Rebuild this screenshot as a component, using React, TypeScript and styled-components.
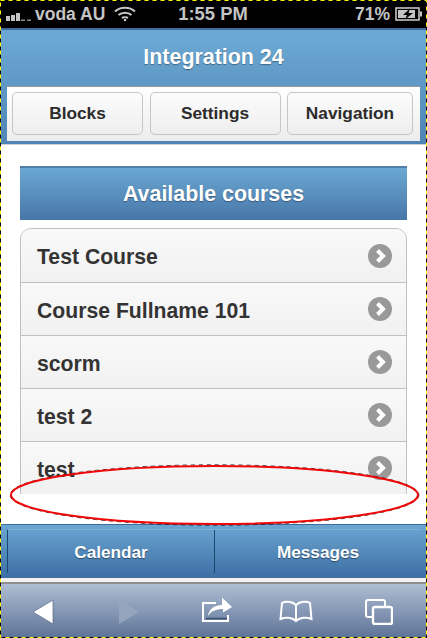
import React from "react";
import styled, { createGlobalStyle } from "styled-components";

const Global = createGlobalStyle`
  html, body { margin: 0; padding: 0; background: #fff; }
  * { box-sizing: border-box; }
`;

const Page = styled.div`
  position: relative;
  width: 427px;
  height: 638px;
  overflow: hidden;
  display: flex;
  flex-direction: column;
  background: #fff;
  font-family: "Liberation Sans", Arial, sans-serif;
  font-weight: 700;
`;

const StatusBar = styled.div`
  height: 28px;
  flex: none;
  background: #000;
  color: #c4c4c4;
  display: grid;
  grid-template-columns: 1fr auto 1fr;
  align-items: center;
  padding: 0 4px 0 5px;
  font-size: 17.5px;
`;
const StatusLeft = styled.div`display: flex; align-items: center; gap: 3px;`;
const StatusTime = styled.div`text-align: center; font-size: 18.4px; white-space: nowrap; margin-right: 2px;`;
const StatusRight = styled.div`display: flex; align-items: center; justify-content: flex-end; gap: 5px;`;
const SignalSvg = styled.svg`margin-top: 5px;`;
const WifiSvg = styled.svg`margin-left: 6px;`;

const Header = styled.div`
  flex: none;
  height: 116px;
  border-top: 2px solid #3f6b9c;
  background: linear-gradient(#6ba8d3 0, #6ba8d3 8px, #5084b5 100%);
  display: flex;
  flex-direction: column;
  padding: 0 1px;
`;
const Title = styled.div`
  height: 56px;
  flex: none;
  padding-bottom: 2px;
  display: flex;
  align-items: center;
  justify-content: center;
  color: #fff;
  font-size: 21.4px;
  text-shadow: 0 1px 1px rgba(0,0,0,.35);
`;
const NavStrip = styled.div`
  margin: 0 6px;
  height: 55px;
  background: linear-gradient(#ffffff, #ececec);
  border-top: 1px solid #9a9a9a;
  display: grid;
  grid-template-columns: 131px 131px 1fr;
  gap: 6.5px;
  padding: 5px 7px 6px 5px;
`;
const NavButton = styled.div`
  border: 1px solid #c6c6c6;
  border-radius: 5px;
  background: linear-gradient(#fcfcfc, #eeeeee);
  color: #2b2b2b;
  font-size: 17.3px;
  display: flex;
  align-items: center;
  justify-content: center;
`;

const Content = styled.div`
  flex: 1;
  min-height: 0;
  padding: 21px 20px 0 20px;
  border-top: 1px solid #d0d0d0;
`;
const SectionHead = styled.div`
  height: 54px;
  border-top: 2px solid #4f7fa9;
  background: linear-gradient(#6ba8d3, #4776a8);
  color: #fff;
  font-size: 21.4px;
  display: flex;
  align-items: center;
  justify-content: center;
  text-shadow: 0 1px 1px rgba(0,0,0,.35);
`;
const ListClip = styled.div`
  margin-top: 8px;
  height: 266px;
  overflow: hidden;
`;
const List = styled.div`
  height: 300px;
  border: 1px solid #c0c0c0;
  border-radius: 11px;
  overflow: hidden;
`;
const Row = styled.div`
  height: 53px;
  padding: 0 14px 0 16px;
  display: flex;
  align-items: center;
  justify-content: space-between;
  color: #333;
  font-size: 21.2px;
  background: linear-gradient(#f9f9f9, #f1f1f1);
  & + & { border-top: 1px solid #c0c0c0; }
`;
const RowLabel = styled.span`
  padding-top: 3px;
`;

const Footer = styled.div`
  flex: none;
  height: 54px;
  background: linear-gradient(#6ba6d2, #3d6ea4);
  padding: 4px 6px 5px 7px;
  border-top: 1px solid #3f6b9c;
`;
const FooterInner = styled.div`
  height: 100%;
  display: grid;
  grid-template-columns: 206px 1fr;
  border-top: 1px solid #7fb0d6;
  border-left: 1px solid #17486f;
`;
const FooterItem = styled.div<{ $divider?: boolean }>`
  display: flex;
  align-items: center;
  justify-content: center;
  padding-top: 2px;
  color: #fff;
  font-size: 17.2px;
  text-shadow: 0 1px 1px rgba(0,0,0,.45);
  ${(p) => (p.$divider ? "border-left: 1px solid #17486f;" : "")}
`;
const Gap = styled.div`
  flex: none;
  height: 6px;
  background: linear-gradient(#f2f2f2 0, #f2f2f2 4px, #8d8d8d 4px);
`;
const Toolbar = styled.div`
  flex: none;
  height: 54px;
  background: linear-gradient(#aebdd2, #5d7397);
  display: grid;
  grid-template-columns: 86px 86px 89px 70px 96px;
  align-items: center;
  justify-items: center;
  padding-top: 2px;
`;
const ShareSvg = styled.svg`margin-bottom: 5px;`;

const Overlay = styled.svg`
  position: absolute;
  left: 0;
  top: 0;
  pointer-events: none;
`;

const Chevron = () => (
  <svg width="24" height="24" viewBox="0 0 24 24">
    <circle cx="12" cy="12" r="12" fill="#999" />
    <path d="M9.5 6.5 L15 12 L9.5 17.5" fill="none" stroke="#fff" strokeWidth="4" />
  </svg>
);

const Signal = () => (
  <SignalSvg width="27" height="8" viewBox="0 0 27 8">
    <rect x="1" y="3" width="4" height="5" fill="#c4c4c4" />
    <rect x="6" y="2" width="4" height="6" fill="#c4c4c4" />
    <rect x="11" y="0" width="4" height="8" fill="#c4c4c4" />
    <rect x="16" y="6.5" width="4" height="1.5" fill="#8a8a8a" />
    <rect x="22" y="6.5" width="4" height="1.5" fill="#8a8a8a" />
  </SignalSvg>
);
const Wifi = () => (
  <WifiSvg width="22" height="16" viewBox="0 0 22 16" fill="none" stroke="#c4c4c4" strokeWidth="2.2">
    <path d="M1 5.5 C6.5 0.5 15.500 0.5 21 5.500" />
    <path d="M4.500 9 C8 6 14 6 17.500 9" />
    <path d="M8 12 C9.500 11 12.500 11 14 12" />
    <circle cx="11" cy="14" r="1.300" fill="#c4c4c4" stroke="none" />
  </WifiSvg>
);
const Battery = () => (
  <svg width="28" height="14" viewBox="0 0 28 14">
    <rect x="1" y="1" width="23" height="12" fill="none" stroke="#c4c4c4" strokeWidth="1.600" />
    <rect x="3" y="3" width="17" height="8" fill="#c4c4c4" />
    <rect x="25" y="4.500" width="2" height="5" fill="#c4c4c4" />
    <path d="M15 1.500 L8 8 H12 L10 12.500 L18 6 H13.500 Z" fill="#000" />
  </svg>
);

const ArrowLeft = () => (
  <svg width="22" height="26" viewBox="0 0 22 26"><path d="M21 1 V25 L1 13 Z" fill="#fff" stroke="#46597a" strokeWidth=".6" /></svg>
);
const ArrowRight = () => (
  <svg width="22" height="26" viewBox="0 0 22 26"><path d="M1 1 V25 L21 13 Z" fill="#94a5bd" /></svg>
);
const Share = () => (
  <ShareSvg width="32" height="26" viewBox="0 0 32 26" fill="none">
    <path d="M15 6 H2 V24 H27 V18" stroke="#fff" strokeWidth="2" />
    <path d="M5 21.500 H26" stroke="#3d4f6e" strokeWidth="1.500" />
    <path d="M7 19 C8 12 13 8.500 21 8 V0.500 L31 10 L22 15.500 V12 C15 12 10 14 7 19 Z" fill="#fff" />
  </ShareSvg>
);
const Book = () => (
  <svg width="34" height="24" viewBox="0 0 34 24" fill="none" stroke="#fff" strokeWidth="2">
    <path d="M17 5 C13 1 6 1 3 3 L1.500 19 C6 17 13 17 17 21 C21 17 28 17 32.500 19 L31 3 C28 1 21 1 17 5 Z" />
    <path d="M17 5 V21" />
  </svg>
);
const Tabs = () => (
  <svg width="28" height="26" viewBox="0 0 28 26" fill="none" stroke="#fff" strokeWidth="2">
    <path d="M7 18 H3 A2 2 0 0 1 1 16 V3 A2 2 0 0 1 3 1 H18 A2 2 0 0 1 20 3 V7" />
    <rect x="8" y="8" width="19" height="17" rx="2" strokeWidth="2.400" />
  </svg>
);

const courses = ["Test Course", "Course Fullname 101", "scorm", "test 2", "test"];

export default function App() {
  return (
    <>
      <Global />
      <Page>
        <StatusBar>
          <StatusLeft>
            <Signal />
            <span>voda AU</span>
            <Wifi />
          </StatusLeft>
          <StatusTime>1:55 PM</StatusTime>
          <StatusRight>
            <span>71%</span>
            <Battery />
          </StatusRight>
        </StatusBar>
        <Header>
          <Title>Integration 24</Title>
          <NavStrip>
            <NavButton>Blocks</NavButton>
            <NavButton>Settings</NavButton>
            <NavButton>Navigation</NavButton>
          </NavStrip>
        </Header>
        <Content>
          <SectionHead>Available courses</SectionHead>
          <ListClip>
            <List>
              {courses.map((c) => (
                <Row key={c}>
                  <RowLabel>{c}</RowLabel>
                  <Chevron />
                </Row>
              ))}
            </List>
          </ListClip>
        </Content>
        <Footer>
          <FooterInner>
            <FooterItem>Calendar</FooterItem>
            <FooterItem $divider>Messages</FooterItem>
          </FooterInner>
        </Footer>
        <Gap />
        <Toolbar>
          <ArrowLeft />
          <ArrowRight />
          <Share />
          <Book />
          <Tabs />
        </Toolbar>
        <Overlay width="427" height="638" viewBox="0 0 427 638">
          <ellipse cx="214.500" cy="495" rx="204.400" ry="30.200" fill="none" stroke="#000" strokeWidth="0.800" strokeDasharray="4 4" />
          <ellipse cx="214.500" cy="495" rx="203.500" ry="29" fill="none" stroke="#f00808" strokeWidth="2" />
          <rect x="0.500" y="0.500" width="426" height="637" fill="none" stroke="#000" />
          <rect x="0.500" y="0.500" width="426" height="637" fill="none" stroke="#ffff00" strokeDasharray="4 4" />
        </Overlay>
      </Page>
    </>
  );
}
